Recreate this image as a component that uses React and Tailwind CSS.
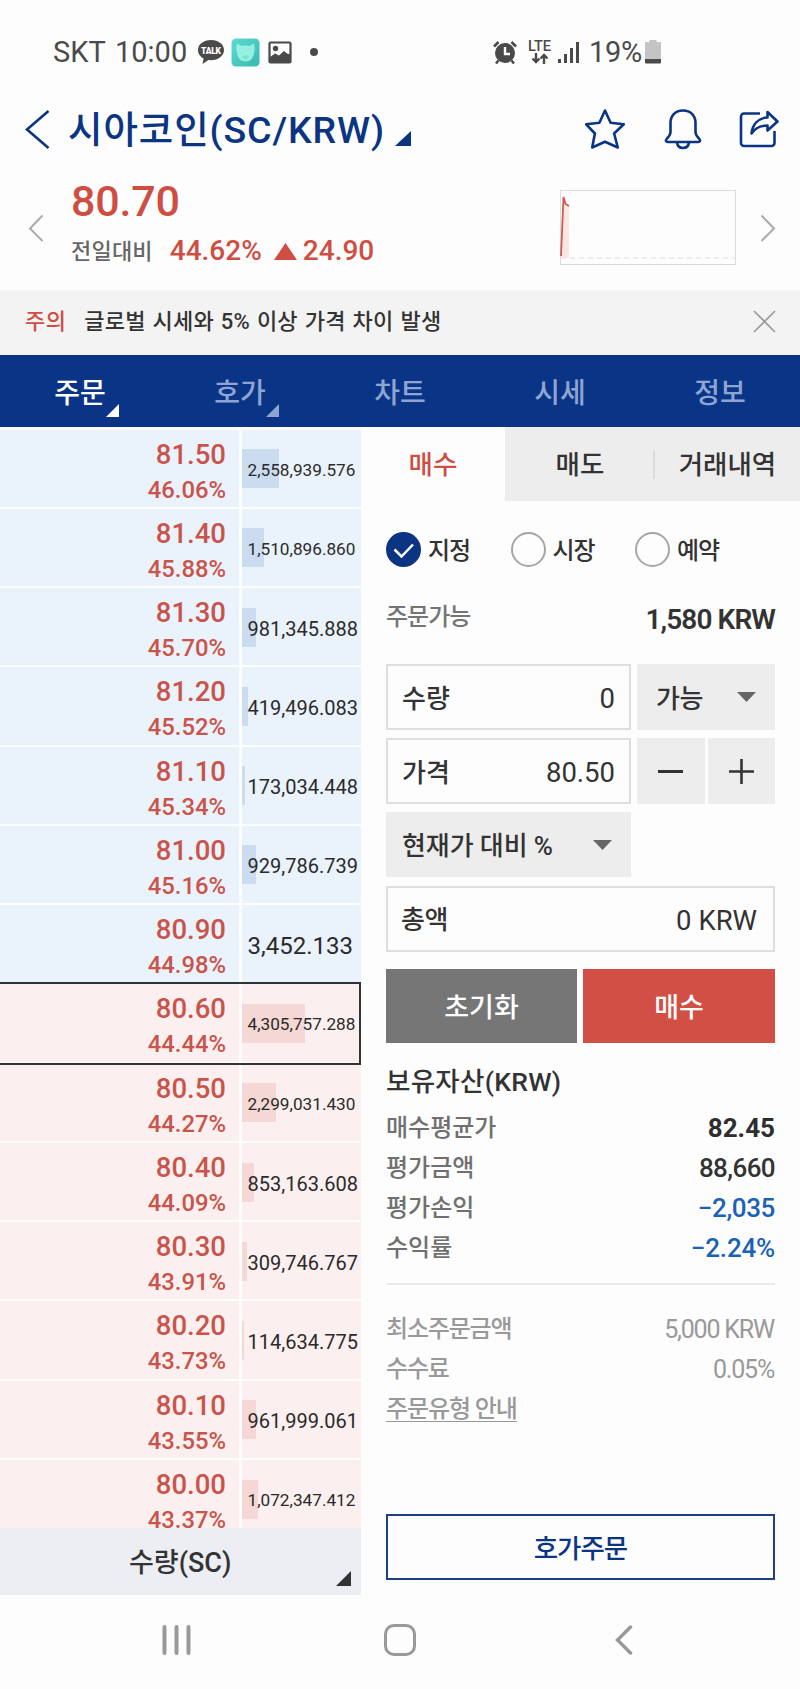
import React, { useState } from 'react';

// asks are blue, bids are red
const orders = [
  { price: '81.50', rate: '46.06%', qty: '2,558,939.576', type: 'ask' },
  { price: '81.40', rate: '45.88%', qty: '1,510,896.860', type: 'ask' },
  { price: '81.30', rate: '45.70%', qty: '981,345.888', type: 'ask' },
  { price: '81.20', rate: '45.52%', qty: '419,496.083', type: 'ask' },
  { price: '81.10', rate: '45.34%', qty: '173,034.448', type: 'ask' },
  { price: '81.00', rate: '45.16%', qty: '929,786.739', type: 'ask' },
  { price: '80.90', rate: '44.98%', qty: '3,452.133', type: 'ask' },
  { price: '80.60', rate: '44.44%', qty: '4,305,757.288', type: 'bid', current: true },
  { price: '80.50', rate: '44.27%', qty: '2,299,031.430', type: 'bid' },
  { price: '80.40', rate: '44.09%', qty: '853,163.608', type: 'bid' },
  { price: '80.30', rate: '43.91%', qty: '309,746.767', type: 'bid' },
  { price: '80.20', rate: '43.73%', qty: '114,634.775', type: 'bid' },
  { price: '80.10', rate: '43.55%', qty: '961,999.061', type: 'bid' },
  { price: '80.00', rate: '43.37%', qty: '1,072,347.412', type: 'bid' },
];

const navTabs = ['주문', '호가', '차트', '시세', '정보'];
const orderTypes = ['지정', '시장', '예약'];

const assets = [
  { label: '매수평균가', value: '82.45', style: 'font-bold text-[#2e2e2e]' },
  { label: '평가금액', value: '88,660', style: 'font-medium tracking-[-0.6px] text-[#333333]' },
  { label: '평가손익', value: '−2,035', style: 'font-medium tracking-[-0.4px] text-[#1a62b5]' },
  { label: '수익률', value: '−2.24%', style: 'font-medium tracking-[-0.2px] text-[#1a62b5]' },
];

function StatusBar() {
  return (
    <div className="flex h-[97px] items-center pl-[53px] pt-[7px] text-[#4a4a4a]">
      <span className="w-[53px] text-[29px] leading-none">SKT</span>
      <span className="ml-[9px] w-[71px] text-[29px] leading-none">10:00</span>
      <svg className="ml-[11px]" width="28" height="26" viewBox="0 0 28 26">
        <path d="M14 1C6.500 1 1 5.400 1 11c0 3.800 2.300 6.800 5.600 8.400L5.500 25l6-3.900c8.600 1 15.500-3.600 15.500-10.100C27 5.400 21.500 1 14 1z" fill="#4a4a4a" />
        <text x="14" y="14.500" textAnchor="middle" fontSize="8.500" fontWeight="900" fill="#fff" textLength="20">TALK</text>
      </svg>
      <svg className="ml-[6px]" width="29" height="29" viewBox="0 0 29 29">
        <defs>
          <linearGradient id="app" x1="0" y1="0" x2="1" y2="1">
            <stop offset="0" stopColor="#5edbcf" />
            <stop offset="1" stopColor="#37b9b1" />
          </linearGradient>
        </defs>
        <rect width="28" height="28" x=".5" y=".5" rx="4.500" fill="url(#app)" />
        <path d="M6 5.500l5 2.500c2-.6 5-.6 7 0l5-2.500c.8 3 .9 6.500 0 9.500-.6 5-4 8.500-8.500 8.500S6.600 20 6 15c-.9-3-.8-6.500 0-9.500z" fill="#95f0e0" />
        <path d="M11 19c1.500-2.500 5.500-2.500 7 0l-3.500 3z" fill="#7ce0d0" />
      </svg>
      <svg className="ml-[8px]" width="24" height="23" viewBox="0 0 24 23">
        <rect x="1.500" y="1.500" width="21" height="20" rx="1" fill="none" stroke="#4a4a4a" strokeWidth="2.200" />
        <circle cx="7.500" cy="7.500" r="2.700" fill="#4a4a4a" />
        <path d="M2 16l5-3.500 4 2L16 10l3 2.500 3.500 1V21H2z" fill="#4a4a4a" />
      </svg>
      <span className="ml-[18px] h-2 w-2 rounded-full bg-[#4a4a4a]" />

      <svg className="ml-[174px]" width="26" height="25" viewBox="0 0 26 25">
        <circle cx="13" cy="13" r="10" fill="#4a4a4a" />
        <path d="M2 6.500L6.500 2M24 6.500L19.500 2M6.500 20.500L4 23.500M19.500 20.500L22 23.500" stroke="#4a4a4a" strokeWidth="2.600" />
        <path d="M13 7v7h5" fill="none" stroke="#fff" strokeWidth="2.400" />
      </svg>
      <div className="ml-[9px] flex w-[25px] flex-col items-center">
        <span className="text-[14.500px] font-medium leading-[13px]">LTE</span>
        <svg width="18" height="11" viewBox="0 0 18 11" fill="none" stroke="#4a4a4a" strokeWidth="2.400">
          <path d="M5 0v9M1.500 5.500L5 9l3.500-3.500M13 11V2M9.500 5.500L13 2l3.500 3.500" />
        </svg>
      </div>
      <svg className="ml-[6px]" width="22" height="23" viewBox="0 0 22 23" fill="#4a4a4a">
        <path d="M0 18h3v4H0zM6 13h3v9H6zM12 7h3v15h-3zM18 1h3v21h-3z" />
      </svg>
      <span className="ml-[9px] w-[53px] text-[29px] leading-none tracking-[-0.300px]">19%</span>
      <svg className="ml-[3px]" width="16" height="24" viewBox="0 0 16 24">
        <path d="M4.500 0h7v2H16v18H0V2h4.500z" fill="#c4c4c4" />
        <path d="M0 19h16v3.500a1 1 0 01-1 1H1a1 1 0 01-1-1z" fill="#4a4a4a" />
      </svg>
    </div>
  );
}

function Header() {
  return (
    <div className="flex h-[66px] items-center pl-[25px] text-[#0b3583]">
      <svg className="-mt-[2px]" width="25" height="40" viewBox="0 0 25 40" fill="none" stroke="#0b3583" strokeWidth="2.600">
        <path d="M23.500 2L2 20.500L23.500 39" />
      </svg>
      <h1 className="ml-[18px] whitespace-nowrap pt-[1px] text-[37.500px] font-medium leading-none tracking-[0.900px]">시아코인(SC/KRW)</h1>
      <svg className="ml-[10px] mt-[16px]" width="16" height="15" viewBox="0 0 16 15">
        <path d="M16 0v15H0z" fill="#0b3583" />
      </svg>
      <svg className="-mt-[2px] ml-auto" width="42" height="42" viewBox="0 0 42 42" fill="none" stroke="#0b3583" strokeWidth="2.600" strokeLinejoin="round">
        <path d="M21 2.500l5.600 12.300 13.200 1.500-9.700 9.200 3.700 14L21 33.700 8.200 39.500l2.700-14-8.700-9.200 13.200-1.500z" />
      </svg>
      <svg className="-mt-[3px] ml-[38px]" width="38" height="42" viewBox="0 0 38 42" fill="none" stroke="#0b3583" strokeWidth="2.600" strokeLinejoin="round">
        <path d="M19 2.500C11 2.500 6.500 8 6.500 15v9c0 3-1.500 4.500-3.500 6.500-2 2.200-1 3.500 1 3.500h30c2 0 3-1.300 1-3.500-2-2-3.500-3.500-3.500-6.500v-9C31.500 8 27 2.500 19 2.500z" />
        <path d="M13 34.500c.5 3.500 3 5.500 6 5.500s5.500-2 6-5.500" />
      </svg>
      <svg className="-mt-[2px] ml-[37px] mr-[21px]" width="40" height="40" viewBox="0 0 40 40" fill="none" stroke="#0b3583" strokeWidth="2.600" strokeLinejoin="round">
        <path d="M21 4.500H5A3 3 0 002 7.500V34a3 3 0 003 3h27.500a3 3 0 003-3V22" />
        <path d="M28.500 3L38.500 12.500L28.500 21.500V16.500C21 16.500 16.500 18.500 12.500 24.500C13.500 15.500 19 9 28.500 8.500z" />
      </svg>
    </div>
  );
}

function Summary() {
  return (
    <div className="flex h-[127px] pl-[28px] text-[#cf4e44]">
      <svg className="mt-[51px]" width="16" height="28" viewBox="0 0 16 28" fill="none" stroke="#aaaaaa" strokeWidth="2">
        <path d="M14.500 1.500L2 14.500L14.500 27" />
      </svg>
      <div className="ml-[27px] pt-[15px]">
        <div className="text-[43px] font-medium leading-[46px] tracking-[-0.2px]">80.70</div>
        <div className="mt-[10px] flex h-[34px] items-center">
          <span className="text-[22px] font-medium tracking-[0.2px] text-[#666666]">전일대비</span>
          <span className="ml-[17px] text-[28px] font-medium">44.62%</span>
          <svg className="ml-[12px]" width="23" height="17" viewBox="0 0 23 17">
            <path d="M11.500 0L23 17H0z" fill="#cf4e44" />
          </svg>
          <span className="ml-[6px] text-[28px] font-medium">24.90</span>
        </div>
      </div>
      <svg className="ml-auto mt-[27px]" width="176" height="75" viewBox="0 0 176 75" fill="none">
        <rect x=".5" y=".5" width="175" height="74" stroke="#dcdcdc" />
        <path d="M1 68L3 7L6 14L9 16V68z" fill="#fbe6e4" />
        <path d="M1 68H175" stroke="#dedede" strokeDasharray="5 4" />
        <path d="M1 66L3.500 7L5.500 14L9 16" stroke="#cf5a52" strokeWidth="1.800" />
      </svg>
      <svg className="ml-[24px] mr-[24px] mt-[51px]" width="16" height="28" viewBox="0 0 16 28" fill="none" stroke="#aaaaaa" strokeWidth="2">
        <path d="M1.500 1.500L14 14.500L1.500 27" />
      </svg>
    </div>
  );
}

function OrderRow({ order }) {
  const ask = order.type === 'ask';
  const amount = Number(order.qty.replace(/,/g, ''));
  // long quantities get a smaller font so they fit the column
  let size = 'text-[24px]';
  if (order.qty.length > 11) size = 'text-[17.200px]';
  else if (order.qty.length > 10) size = 'text-[20px]';

  return (
    <div className="relative flex h-[79.270px] shrink-0 gap-[3px] pb-[2px]">
      <div className={`flex w-[239px] flex-col items-end pr-[13px] ${ask ? 'bg-[#eaf2fb]' : 'bg-[#fbf0ef]'}`}>
        <span className="mt-[9px] text-[27.500px] font-medium leading-[32px] text-[#c9544b]">{order.price}</span>
        <span className="mt-[4px] text-[23.800px] font-medium leading-[30px] text-[#c9544b]">{order.rate}</span>
      </div>
      <div className={`grid flex-1 items-center ${ask ? 'bg-[#eaf2fb]' : 'bg-[#fbf0ef]'}`}>
        <div
          className={`col-start-1 row-start-1 mt-[1px] h-[39px] ${ask ? 'bg-[#cbdcf1]' : 'bg-[#f5d8d5]'}`}
          style={{ width: Math.round(amount * 0.0000146) }}
        />
        <span className={`col-start-1 row-start-1 pl-[5.500px] pt-[4px] leading-none text-[#2a2a2a] ${size}`}>{order.qty}</span>
      </div>
      {order.current && <div className="absolute -top-[2px] bottom-[-1px] -left-[2px] right-0 z-10 border-2 border-[#333333]" />}
    </div>
  );
}

function OrderBook() {
  return (
    <div className="flex w-[361px] flex-col">
      <div className="flex h-[1101px] flex-col overflow-hidden pt-[2.500px]">
        {orders.map((order) => (
          <OrderRow key={order.price} order={order} />
        ))}
      </div>
      <div className="flex h-[67px] bg-[#edeef3]">
        <span className="ml-[129px] w-[207px] pt-[15px] text-[27px] font-medium leading-[40px] text-[#333333]">수량(SC)</span>
        <svg className="mt-[43px]" width="15" height="15" viewBox="0 0 15 15">
          <path d="M15 0v15H0z" fill="#333333" />
        </svg>
      </div>
    </div>
  );
}

function Caret() {
  return (
    <svg width="19" height="10" viewBox="0 0 19 10">
      <path d="M0 0h19L9.500 10z" fill="#666666" />
    </svg>
  );
}

function OrderForm() {
  const [orderType, setOrderType] = useState('지정');

  return (
    <div className="flex-1 text-[#333333]">
      <div className="flex h-[74px] text-[26.500px] font-medium">
        <button className="w-[144px] pt-[2px] text-[#cf4e44]">매수</button>
        <button className="w-[148px] bg-[#ededed] pl-[2px] pt-[2px]">매도</button>
        <div className="flex flex-1 items-center bg-[#ededed]">
          <span className="h-[29px] w-[2px] bg-[#dcdcdc]" />
          <button className="flex-1 whitespace-nowrap pt-[2px]">거래내역</button>
        </div>
      </div>

      <div className="pl-[25px] pr-[25px]">
        <div className="mt-[31px] flex h-[35px]">
          {orderTypes.map((type) => (
            <button key={type} onClick={() => setOrderType(type)} className="flex w-[124.500px] items-center gap-[7px] text-[24px] font-medium tracking-[-1px]">
              {type === orderType ? (
                <svg width="35" height="35" viewBox="0 0 35 35">
                  <circle cx="17.500" cy="17.500" r="17.500" fill="#0b3583" />
                  <path d="M8.500 17.500l7 7L27 12.500" fill="none" stroke="#fff" strokeWidth="2.500" />
                </svg>
              ) : (
                <span className="h-[35px] w-[35px] rounded-full border-2 border-[#a6a6a6]" />
              )}
              <span className="pt-[2px]">{type}</span>
            </button>
          ))}
        </div>

        <div className="mt-[29px] flex h-[43px] justify-between">
          <span className="text-[24px] font-medium leading-[42px] tracking-[-1px] text-[#757575]">주문가능</span>
          <span className="text-[28px] font-semibold leading-[47px] tracking-[-0.900px]">1,580 KRW</span>
        </div>

        <div className="mt-[25px] flex gap-[6px]">
          <div className="flex h-[66px] w-[245px] items-center justify-between border-2 border-[#dedede] px-[14px] pt-[4px]">
            <span className="text-[26px] font-medium">수량</span>
            <span className="text-[27.500px]">0</span>
          </div>
          <button className="flex h-[66px] flex-1 items-center justify-between bg-[#ededed] pl-[19px] pr-[19px]">
            <span className="pt-[4px] text-[26px] font-medium tracking-[-0.5px]">가능</span>
            <Caret />
          </button>
        </div>

        <div className="mt-[8px] flex gap-[6px]">
          <div className="flex h-[66px] w-[245px] items-center justify-between border-2 border-[#dedede] px-[14px] pt-[4px]">
            <span className="text-[26px] font-medium">가격</span>
            <span className="text-[27.500px]">80.50</span>
          </div>
          <div className="flex flex-1 gap-[3px]">
            <button className="flex flex-1 items-center justify-center bg-[#ededed]">
              <span className="h-[3px] w-[25px] bg-[#333333]" />
            </button>
            <button className="flex flex-1 items-center justify-center bg-[#ededed]">
              <svg width="25" height="25" viewBox="0 0 25 25" stroke="#333333" strokeWidth="2.600">
                <path d="M0 12.500h25M12.500 0v25" />
              </svg>
            </button>
          </div>
        </div>

        <button className="mt-[8px] flex h-[65px] w-[245px] items-center justify-between bg-[#ededed] pl-[16px] pr-[19px]">
          <span className="pt-[4px] text-[26px] font-medium tracking-[-0.100px]">현재가 대비 %</span>
          <Caret />
        </button>

        <div className="mt-[9px] flex h-[66px] items-center justify-between border-2 border-[#dedede] pl-[13px] pr-[16px] pt-[3px]">
          <span className="text-[26px] font-medium tracking-[-0.5px]">총액</span>
          <span className="text-[27.500px]">0 KRW</span>
        </div>

        <div className="mt-[17px] flex h-[74px] gap-[6px] text-[27px] font-medium text-white">
          <button className="w-[191px] bg-[#767676] pt-[5px]">초기화</button>
          <button className="flex-1 bg-[#d14f45] pt-[5px]">매수</button>
        </div>

        <h2 className="mt-[19px] text-[26.500px] font-medium leading-[40px] tracking-[0.300px]">보유자산(KRW)</h2>
        <div className="mt-[6px]">
          {assets.map((item) => (
            <div key={item.label} className="flex h-[40.100px] items-center justify-between">
              <span className="text-[24px] font-medium text-[#707070]">{item.label}</span>
              <span className={`text-[26px] ${item.style}`}>{item.value}</span>
            </div>
          ))}
        </div>

        <div className="mt-[15px] border-t-2 border-[#ebebeb] pt-[24px] text-[25px] tracking-[-1.200px] text-[#999999]">
          <div className="flex h-[40px] items-center justify-between">
            <span className="text-[24px] font-medium">최소주문금액</span>
            <span className="pr-[1px]">5,000 KRW</span>
          </div>
          <div className="flex h-[40px] items-center justify-between">
            <span className="text-[24px] font-medium">수수료</span>
            <span className="pr-[1px]">0.05%</span>
          </div>
          <div className="flex h-[40px] items-center">
            <a className="border-b border-[#999999] pt-[1px] text-[24px] font-medium leading-[23px] tracking-[-1.100px]">주문유형 안내</a>
          </div>
        </div>

        <button className="mt-[85px] h-[66px] w-full border-2 border-[#1c4080] pt-[2px] text-[26.500px] font-medium tracking-[-1px] text-[#0b3583]">
          호가주문
        </button>
      </div>
    </div>
  );
}

function App() {
  return (
    <div className="h-[1689px] w-[800px] overflow-hidden bg-[#fdfdfd] font-['Roboto','Noto_Sans_CJK_KR',sans-serif]">
      <StatusBar />
      <Header />
      <Summary />

      <div className="flex h-[65px] items-center bg-[#f3f3f3] pb-[2px] pl-[25px] pr-[24px] text-[22px] font-medium">
        <span className="tracking-[0.400px] text-[#cf4e44]">주의</span>
        <span className="ml-[18px] tracking-[0.200px] text-[#333333] [word-spacing:1.300px]">글로벌 시세와 5% 이상 가격 차이 발생</span>
        <svg className="ml-auto" width="23" height="23" viewBox="0 0 23 23" stroke="#9a9a9a" strokeWidth="1.600">
          <path d="M1 1l21 21M22 1L1 22" />
        </svg>
      </div>

      <nav className="flex h-[72px] bg-[#0a3586]">
        {navTabs.map((tab, i) => (
          <div key={tab} className={`relative flex flex-1 items-center justify-center pt-[5px] text-[28px] font-medium ${i === 0 ? 'text-white' : 'text-[#8ea5d3]'}`}>
            {tab}
            {i < 2 && (
              <svg className="absolute bottom-[10px] right-[41px]" width="13" height="13" viewBox="0 0 13 13">
                <path d="M13 0v13H0z" fill="currentColor" />
              </svg>
            )}
          </div>
        ))}
      </nav>

      <div className="flex">
        <OrderBook />
        <OrderForm />
      </div>

      <div className="flex h-[90px] items-center pl-[162px]">
        <svg width="29" height="30" viewBox="0 0 29 30" stroke="#999999" strokeWidth="4" strokeLinecap="round">
          <path d="M2.500 2v26M14.500 2v26M26.500 2v26" />
        </svg>
        <span className="ml-[193px] h-[32px] w-[32px] rounded-[10px] border-[3.500px] border-[#999999]" />
        <svg className="ml-[199px]" width="18" height="30" viewBox="0 0 18 30" fill="none" stroke="#999999" strokeWidth="3.500" strokeLinecap="round">
          <path d="M15.500 2L2.500 15l13 13" />
        </svg>
      </div>
    </div>
  );
}

export default App;
